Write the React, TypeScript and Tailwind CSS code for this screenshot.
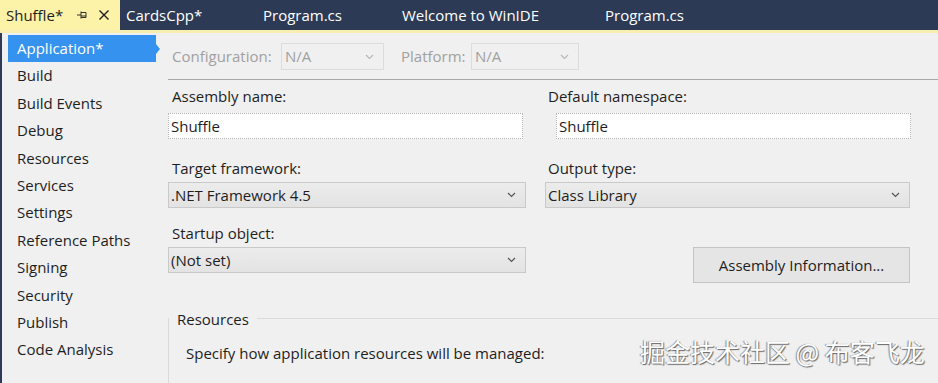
import React from "react"

const font = { fontFamily: '"Open Sans", "Noto Sans", sans-serif' }

const navItems = [
  "Build",
  "Build Events",
  "Debug",
  "Resources",
  "Services",
  "Settings",
  "Reference Paths",
  "Signing",
  "Security",
  "Publish",
  "Code Analysis",
]

function Chevron({ light }: { light?: boolean }) {
  return (
    <svg width="9" height="6" viewBox="0 0 9 6" className="shrink-0">
      <path d="M1 1 L4.5 4.5 L8 1" fill="none" stroke={light ? "#b8b8b8" : "#555"} strokeWidth="1.2" />
    </svg>
  )
}

function Select({ value, className }: { value: string; className: string }) {
  return (
    <div
      className={
        "h-[26px] flex items-center justify-between pl-[2px] pr-[9px] border border-[#c9c9c9] bg-gradient-to-b from-[#ececec] to-[#e3e3e3] text-[15px] text-[#1e1e1e] " +
        className
      }
    >
      <span>{value}</span>
      <Chevron />
    </div>
  )
}

function TextBox({ value, className }: { value: string; className: string }) {
  return (
    <div className={"h-[26px] flex items-center px-[2px] bg-white border border-dotted border-[#b5b5b5] text-[15px] text-[#1e1e1e] " + className}>
      {value}
    </div>
  )
}

export default function App() {
  return (
    <div className="w-[938px] h-[383px] overflow-hidden bg-[#f0f0f0] flex flex-col relative" style={font}>
      {/* tab strip */}
      <div className="h-[30px] bg-[#2c3a55] flex items-stretch text-[15px] text-white shrink-0">
        <div className="w-[120px] bg-[#fcf2a8] text-[#1e1e1e] flex items-center pl-[6px] gap-[10px]">
          <span>Shuffle*</span>
          <svg width="12" height="12" viewBox="0 0 12 12" className="ml-[3px]">
            <path d="M1 6 H5 M5 2.5 V9.5 M5 3.5 H10 V8.5 H5 M5 7 H10" fill="none" stroke="#333" strokeWidth="1" />
          </svg>
          <svg width="12" height="12" viewBox="0 0 12 12">
            <path d="M1.5 1.5 L10.5 10.5 M10.5 1.5 L1.5 10.5" stroke="#1e1e1e" strokeWidth="1.4" />
          </svg>
        </div>
        <div className="flex items-center pl-[6px] w-[143px]">CardsCpp*</div>
        <div className="flex items-center w-[139px]">Program.cs</div>
        <div className="flex items-center w-[203px]">Welcome to WinIDE</div>
        <div className="flex items-center">Program.cs</div>
      </div>
      <div className="h-[3px] bg-[#f7eeb0] shrink-0" />

      <div className="flex flex-1">
        {/* left nav */}
        <div className="w-[2px] bg-[#2c3a55]" />
        <div className="w-[166px] pt-[2px] text-[15px] text-[#1e1e1e]">
          <div className="ml-[6px] h-[27px] w-[148px] bg-[#3592ee] text-white flex items-center pl-[9px] relative">
            Application*
            <div className="absolute right-[-4px] top-[9px] w-0 h-0 border-y-[5px] border-y-transparent border-l-[4px] border-l-[#3592ee]" />
          </div>
          {navItems.map((item) => (
            <div key={item} className="h-[27.4px] flex items-center pl-[15px]">
              {item}
            </div>
          ))}
        </div>

        {/* content */}
        <div className="flex-1 flex flex-col">
          <div className="mt-[10px] h-[27px] flex items-center text-[15px] text-[#a0a0a0]">
            <span className="ml-[4px] w-[109px]">Configuration:</span>
            <div className="w-[103px] h-[27px] border border-[#dcdcdc] flex items-center justify-between pl-[3px] pr-[9px]">
              <span>N/A</span>
              <Chevron light />
            </div>
            <span className="ml-[17px] w-[70px]">Platform:</span>
            <div className="w-[108px] h-[27px] border border-[#dcdcdc] flex items-center justify-between pl-[3px] pr-[9px]">
              <span>N/A</span>
              <Chevron light />
            </div>
          </div>
          <div className="mt-[9px] h-px bg-[#a8a8a8]" />

          <div className="flex text-[15px] text-[#1e1e1e]">
            <div className="w-[377px] flex flex-col">
              <div className="mt-[6px] h-[20px] pl-[4px] flex items-center">Assembly name:</div>
              <TextBox value="Shuffle" className="mt-[7px] w-[355px]" />
              <div className="mt-[19px] h-[20px] pl-[4px] flex items-center">Target framework:</div>
              <Select value=".NET Framework 4.5" className="mt-[4px] w-[358px]" />
              <div className="mt-[15px] h-[20px] pl-[4px] flex items-center">Startup object:</div>
              <Select value="(Not set)" className="mt-[4px] w-[358px]" />
            </div>
            <div className="w-[366px] flex flex-col">
              <div className="mt-[6px] h-[20px] pl-[3px] flex items-center">Default namespace:</div>
              <TextBox value="Shuffle" className="mt-[7px] ml-[11px] w-[355px]" />
              <div className="mt-[19px] h-[20px] pl-[3px] flex items-center">Output type:</div>
              <Select value="Class Library" className="mt-[4px] w-[365px]" />
              <div className="mt-[39px] ml-[148px] w-[217px] h-[36px] border border-[#c4c4c4] bg-[#e5e5e5] flex items-center justify-center">
                Assembly Information...
              </div>
            </div>
          </div>

          {/* Resources group */}
          <div className="mt-[35px] flex-1 border-l border-[#dadada] flex flex-col">
            <div className="flex items-center h-0">
              <span className="pl-[8px] pr-[8px] text-[15px] text-[#1e1e1e] leading-none translate-y-[1px]">Resources</span>
              <div className="flex-1 h-px bg-[#dadada]" />
            </div>
            <div className="mt-[24px] pl-[17px] text-[15px] text-[#1e1e1e]">
              Specify how application resources will be managed:
            </div>
          </div>
        </div>
      </div>

      {/* watermark */}
      <div
        className="absolute left-[640px] top-[339px] text-[25px] text-white leading-none whitespace-nowrap"
        style={{ fontFamily: '"Noto Sans CJK SC", sans-serif', textShadow: "1px 1px 1px #666, -1px 0 1px #888" }}
      >
        掘金技术社区 @ 布客飞龙
      </div>
    </div>
  )
}
